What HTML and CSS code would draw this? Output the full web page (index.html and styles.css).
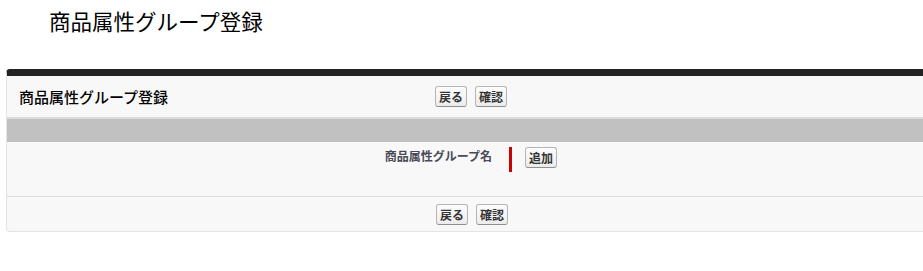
FILE: index.html
```html
<!DOCTYPE html>
<html lang="ja">
<head>
    <meta charset="UTF-8">
    <title>商品属性グループ登録</title>
    <link rel="stylesheet" href="styles.css">
</head>
<body>
    <h1 class="page-title">商品属性グループ登録</h1>
    <div class="page-block">
        <div class="block-header">
            <h2 class="block-title">商品属性グループ登録</h2>
            <div class="buttons">
                <button class="btn">戻る</button>
                <button class="btn">確認</button>
            </div>
        </div>
        <div class="section-bar"></div>
        <div class="field-row">
            <div class="field-label">商品属性グループ名</div>
            <div class="field-data">
                <span class="required"></span>
                <button class="btn">追加</button>
            </div>
        </div>
        <div class="block-footer">
            <div class="buttons">
                <button class="btn">戻る</button>
                <button class="btn">確認</button>
            </div>
        </div>
    </div>
</body>
</html>
```

FILE: styles.css
```css
body {
    margin: 0;
    overflow: hidden;
    background: white;
    font-family: "Noto Sans CJK JP", "Liberation Sans", sans-serif;
    color: #000;
}

.page-title {
    margin: 0;
    padding: 8px 0 0 49px;
    font-size: 21.5px;
    line-height: 26px;
    font-weight: normal;
}

.page-block {
    margin: 35px 0 0 6px;
    width: 930px;
    background: #f8f8f8;
    border: 1px solid #e4e4e4;
    border-top: 7px solid #222;
    border-radius: 4px;
}

.block-header {
    display: flex;
    align-items: center;
    height: 41px;
    border-bottom: 2px solid #dcdcdc;
}

.block-title {
    margin: 0;
    width: 416px;
    padding-left: 12px;
    font-size: 15px;
    font-weight: 500;
}

.buttons {
    display: flex;
    gap: 8px;
}

.btn {
    height: 21px;
    padding: 0 3px;
    font-family: "Noto Sans CJK JP", sans-serif;
    font-size: 12px;
    font-weight: bold;
    line-height: 19px;
    color: #333;
    background: linear-gradient(#fdfdfd, #ececec);
    border: 1px solid #b5b5b5;
    border-bottom-color: #8f8f8f;
    border-radius: 3px;
}

.section-bar {
    height: 23px;
    background: #c1c1c1;
}

.field-row {
    display: flex;
    height: 54px;
}

.field-label {
    width: 485px;
    padding: 5px 10px 0 0;
    text-align: right;
    font-size: 12px;
    line-height: 17px;
    font-weight: bold;
    color: #4a4a56;
}

.field-data {
    display: flex;
    align-items: flex-start;
    padding: 5px 0 0 7px;
}

.required {
    width: 3px;
    height: 25px;
    background: #c00;
    margin-right: 13px;
}

.block-footer {
    display: flex;
    justify-content: center;
    align-items: center;
    height: 34px;
    border-top: 1px solid #dcdcdc;
}
```
